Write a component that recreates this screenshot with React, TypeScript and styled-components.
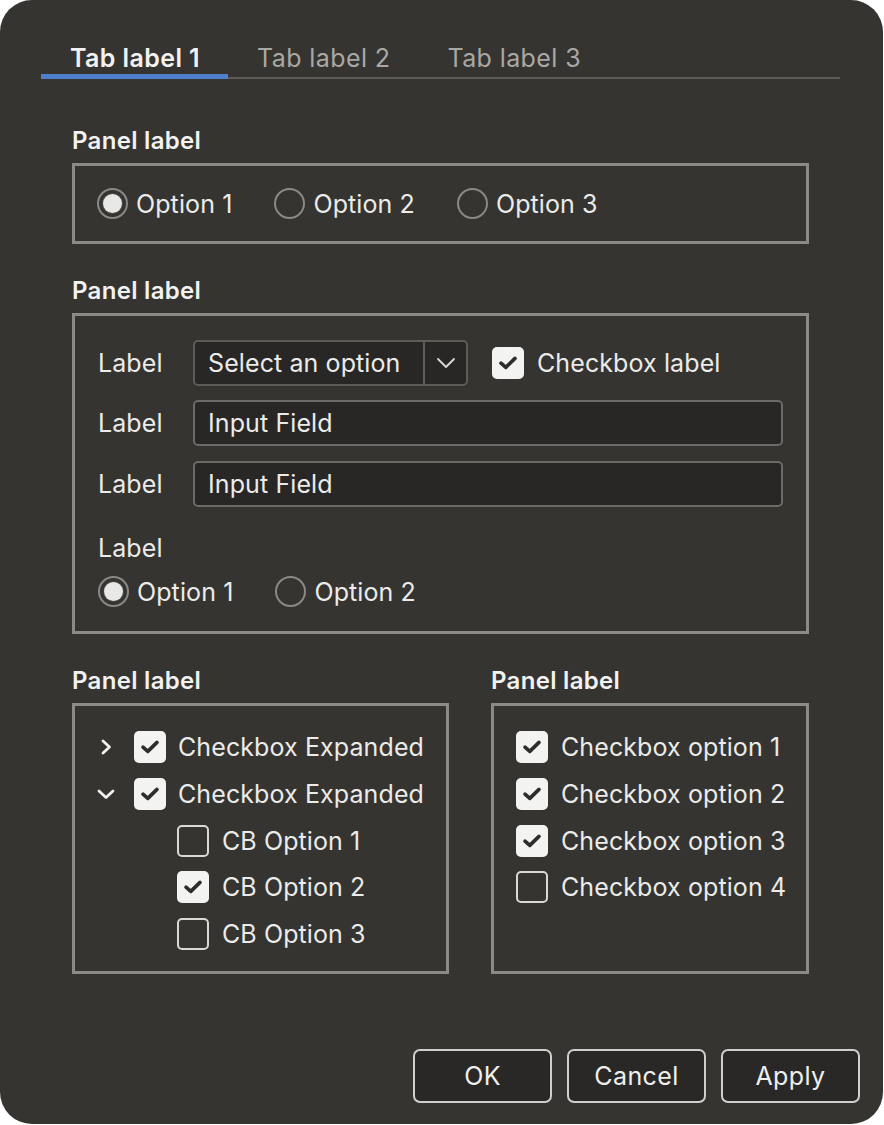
import React from "react";
import styled, { createGlobalStyle } from "styled-components";

const Global = createGlobalStyle`
  html, body { margin: 0; padding: 0; background: #ffffff; }
  body { font-family: Inter, "Open Sans", "Liberation Sans", sans-serif; }
  * { box-sizing: border-box; }
`;

const Dialog = styled.div`
  width: 883px;
  height: 1124px;
  background: #353430;
  border-radius: 32px;
  padding: 44px 23px 21px 41px;
  display: flex;
  flex-direction: column;
  color: #ebebea;
  font-size: 25px;
  line-height: 28px;
  letter-spacing: 0.1px;
`;

const TabBar = styled.div`
  display: flex;
  margin-right: 20px;
  border-bottom: 2px solid #5c5b58;
`;

const Tab = styled.div<{ $active?: boolean }>`
  padding: 0 28px 2px 29px;
  margin-bottom: -2px;
  border-bottom: 5px solid ${(p) => (p.$active ? "#4f7fcb" : "transparent")};
  font-weight: ${(p) => (p.$active ? 600 : 400)};
  color: ${(p) => (p.$active ? "#f2f2f2" : "#a9a8a5")};
  letter-spacing: 0.4px;
  white-space: nowrap;
`;

const Content = styled.div`
  margin-left: 31px;
  width: 737px;
  display: flex;
  flex-direction: column;
  margin-top: 48px;
  gap: 33px;
`;

const Section = styled.div`
  display: flex;
  flex-direction: column;
  gap: 8px;
  min-width: 0;
`;

const SectionLabel = styled.div`
  font-weight: 600;
  color: #f2f2f2;
  font-size: 24px;
  letter-spacing: 0.3px;
`;

const Panel = styled.div<{ $pad?: string; $height?: number }>`
  border: 3px solid #8b8a87;
  padding: ${(p) => p.$pad ?? "0"};
  ${(p) => (p.$height ? `height: ${p.$height}px;` : "")}
`;

const RadioRow = styled.div`
  display: flex;
  align-items: center;
  gap: 42px;
`;

const RadioItem = styled.label`
  display: flex;
  align-items: center;
  gap: 8px;
`;

const RadioCircle = styled.span<{ $checked?: boolean }>`
  width: 31px;
  height: 31px;
  border-radius: 50%;
  border: 2px solid #8a8986;
  display: flex;
  align-items: center;
  justify-content: center;
  &::after {
    content: "";
    display: ${(p) => (p.$checked ? "block" : "none")};
    width: 19px;
    height: 19px;
    border-radius: 50%;
    background: #e8e8e6;
    box-shadow: 0 0 0 1px #4a4946;
  }
`;

const FormGrid = styled.div`
  display: flex;
  flex-direction: column;
`;

const FormRow = styled.div<{ $mt?: number }>`
  display: flex;
  align-items: center;
  margin-top: ${(p) => p.$mt ?? 0}px;
`;

const FieldLabel = styled.div`
  width: 95px;
  flex: none;
`;

const Select = styled.div`
  width: 275px;
  height: 46px;
  flex: none;
  background: #282725;
  border: 2px solid #5d5c59;
  border-radius: 5px;
  display: flex;
  align-items: center;
`;

const SelectText = styled.div`
  flex: 1;
  padding-left: 13px;
  white-space: nowrap;
`;

const SelectButton = styled.div`
  width: 43px;
  height: 100%;
  border-left: 2px solid #5d5c59;
  display: flex;
  align-items: center;
  justify-content: center;
`;

const Input = styled.div`
  flex: 1;
  height: 46px;
  background: #282725;
  border: 2px solid #6b6a67;
  border-radius: 5px;
  padding-left: 13px;
  display: flex;
  align-items: center;
`;

const CheckItem = styled.div<{ $gap?: number; $indent?: number }>`
  display: flex;
  align-items: center;
  gap: ${(p) => p.$gap ?? 12}px;
  margin-left: ${(p) => p.$indent ?? 0}px;
  height: 32px;
  white-space: nowrap;
`;

const Box = styled.span<{ $checked?: boolean }>`
  width: 32px;
  height: 32px;
  flex: none;
  border-radius: 5px;
  background: ${(p) => (p.$checked ? "#f3f3f2" : "transparent")};
  border: ${(p) => (p.$checked ? "none" : "2px solid #d9d9d7")};
  display: flex;
  align-items: center;
  justify-content: center;
`;

const List = styled.div`
  display: flex;
  flex-direction: column;
  gap: 14.75px;
`;

const Chevron = styled.span`
  width: 24px;
  flex: none;
  display: flex;
  align-items: center;
  justify-content: center;
`;

const TwoCols = styled.div`
  display: flex;
  gap: 42px;
`;

const Footer = styled.div`
  margin-top: auto;
  display: flex;
  justify-content: flex-end;
  gap: 15px;
`;

const Button = styled.button`
  width: 139px;
  height: 54px;
  background: #292826;
  border: 2px solid #cfcfcd;
  border-radius: 7px;
  color: #efefee;
  font-family: inherit;
  font-size: 25px;
  letter-spacing: 0.4px;
  line-height: 28px;
`;

const Check = () => (
  <svg width="20" height="16" viewBox="0 0 20 16">
    <path d="M3 8.2 L7.8 12.4 L17 3.4" fill="none" stroke="#2e2d2a" strokeWidth="3.6" strokeLinecap="round" strokeLinejoin="round" />
  </svg>
);

const Checkbox = ({ checked }: { checked?: boolean }) => <Box $checked={checked}>{checked && <Check />}</Box>;

const Radio = ({ checked, label }: { checked?: boolean; label: string }) => (
  <RadioItem>
    <RadioCircle $checked={checked} />
    {label}
  </RadioItem>
);

const ChevronRight = () => (
  <svg width="14" height="18" viewBox="0 0 14 18">
    <path d="M4 3 L10.5 9 L4 15" fill="none" stroke="#f0f0ef" strokeWidth="2.8" strokeLinecap="round" strokeLinejoin="round" />
  </svg>
);

const ChevronDown = () => (
  <svg width="20" height="14" viewBox="0 0 20 14">
    <path d="M3 4 L10 10.5 L17 4" fill="none" stroke="#f0f0ef" strokeWidth="2.8" strokeLinecap="round" strokeLinejoin="round" />
  </svg>
);

const SelectChevron = () => (
  <svg width="20" height="12" viewBox="0 0 20 12">
    <path d="M2 2 L10 10 L18 2" fill="none" stroke="#d8d8d6" strokeWidth="1.8" strokeLinecap="round" strokeLinejoin="round" />
  </svg>
);

export default function App() {
  return (
    <>
      <Global />
      <Dialog>
        <TabBar>
          <Tab $active>Tab label 1</Tab>
          <Tab>Tab label 2</Tab>
          <Tab>Tab label 3</Tab>
        </TabBar>
        <Content>
          <Section>
            <SectionLabel>Panel label</SectionLabel>
            <Panel $pad="22px 22px 22px 22px">
              <RadioRow>
                <Radio checked label="Option 1" />
                <Radio label="Option 2" />
                <Radio label="Option 3" />
              </RadioRow>
            </Panel>
          </Section>
          <Section>
            <SectionLabel>Panel label</SectionLabel>
            <Panel $pad="24px 23px 24px 23px">
              <FormGrid>
                <FormRow>
                  <FieldLabel>Label</FieldLabel>
                  <Select>
                    <SelectText>Select an option</SelectText>
                    <SelectButton>
                      <SelectChevron />
                    </SelectButton>
                  </Select>
                  <CheckItem $indent={24} $gap={13}>
                    <Checkbox checked />
                    Checkbox label
                  </CheckItem>
                </FormRow>
                <FormRow $mt={14}>
                  <FieldLabel>Label</FieldLabel>
                  <Input>Input Field</Input>
                </FormRow>
                <FormRow $mt={15}>
                  <FieldLabel>Label</FieldLabel>
                  <Input>Input Field</Input>
                </FormRow>
                <FormRow $mt={27}>
                  <FieldLabel>Label</FieldLabel>
                </FormRow>
                <RadioRow style={{ marginTop: 14 }}>
                  <Radio checked label="Option 1" />
                  <Radio label="Option 2" />
                </RadioRow>
              </FormGrid>
            </Panel>
          </Section>
          <TwoCols>
            <Section style={{ width: 377 }}>
              <SectionLabel>Panel label</SectionLabel>
              <Panel $pad="25px 19px 0 19px" $height={271}>
                <List>
                  <CheckItem $gap={16}>
                    <Chevron>
                      <ChevronRight />
                    </Chevron>
                    <CheckItem>
                      <Checkbox checked />
                      Checkbox Expanded
                    </CheckItem>
                  </CheckItem>
                  <CheckItem $gap={16}>
                    <Chevron>
                      <ChevronDown />
                    </Chevron>
                    <CheckItem>
                      <Checkbox checked />
                      Checkbox Expanded
                    </CheckItem>
                  </CheckItem>
                  <CheckItem $indent={83} $gap={13}>
                    <Checkbox />
                    CB Option 1
                  </CheckItem>
                  <CheckItem $indent={83} $gap={13}>
                    <Checkbox checked />
                    CB Option 2
                  </CheckItem>
                  <CheckItem $indent={83} $gap={13}>
                    <Checkbox />
                    CB Option 3
                  </CheckItem>
                </List>
              </Panel>
            </Section>
            <Section style={{ width: 318 }}>
              <SectionLabel>Panel label</SectionLabel>
              <Panel $pad="25px 22px 0 22px" $height={271}>
                <List>
                  <CheckItem $gap={13}>
                    <Checkbox checked />
                    Checkbox option 1
                  </CheckItem>
                  <CheckItem $gap={13}>
                    <Checkbox checked />
                    Checkbox option 2
                  </CheckItem>
                  <CheckItem $gap={13}>
                    <Checkbox checked />
                    Checkbox option 3
                  </CheckItem>
                  <CheckItem $gap={13}>
                    <Checkbox />
                    Checkbox option 4
                  </CheckItem>
                </List>
              </Panel>
            </Section>
          </TwoCols>
        </Content>
        <Footer>
          <Button>OK</Button>
          <Button>Cancel</Button>
          <Button>Apply</Button>
        </Footer>
      </Dialog>
    </>
  );
}
